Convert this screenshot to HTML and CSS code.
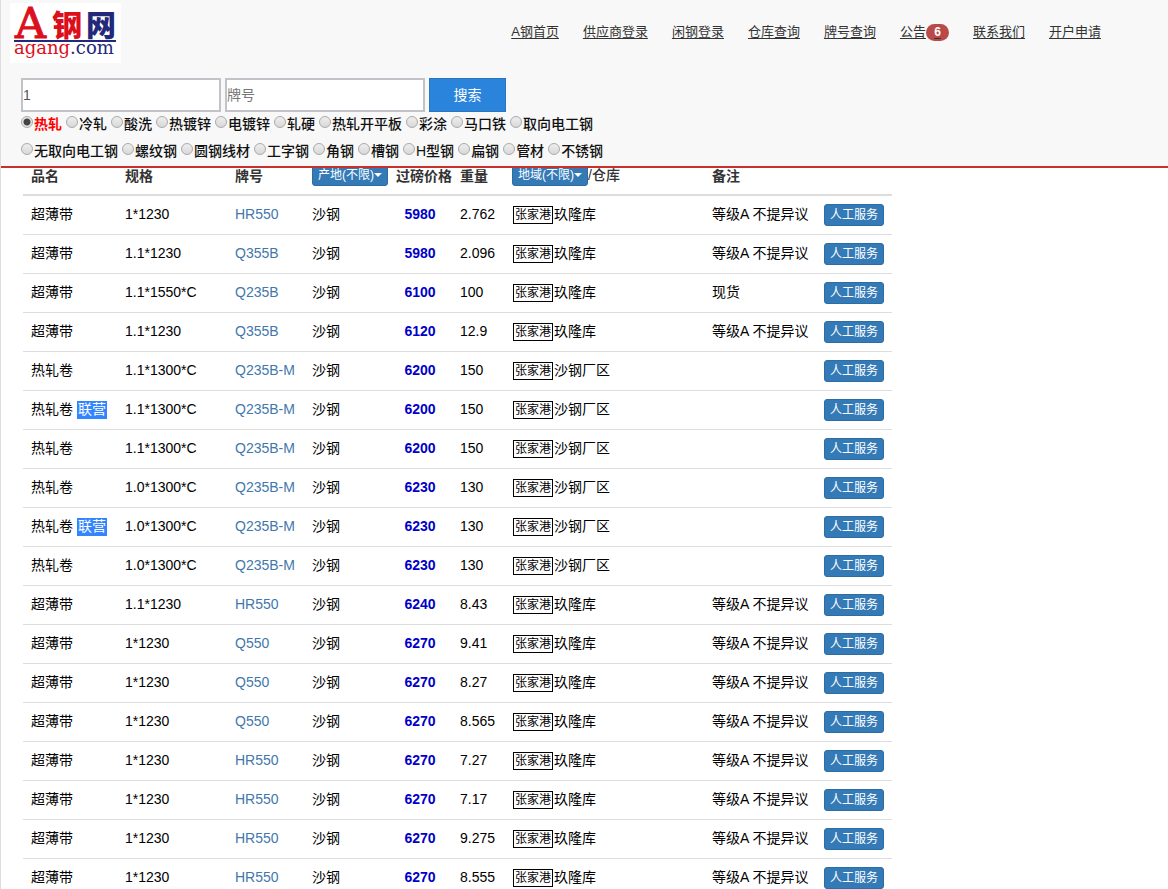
FILE: index.html
```html
<!DOCTYPE html>
<html lang="zh-CN">
<head>
<meta charset="utf-8">
<title>A钢网</title>
<link rel="stylesheet" href="styles.css">
</head>
<body>
<header class="site-header">
  <div class="top-bar">
    <svg class="logo" width="111" height="60" viewBox="0 0 111 60" role="img" aria-label="A钢网 agang.com">
      <rect width="111" height="60" fill="#fff"/>
      <text class="logo-a" x="5" y="35">A</text>
      <text class="logo-cjk logo-red" x="42" y="33">钢</text>
      <text class="logo-cjk logo-blue" x="76" y="33">网</text>
      <rect x="4" y="37" width="102" height="2" fill="#23297a"/>
      <text class="logo-domain" x="4" y="51"><tspan class="logo-red">agang</tspan><tspan class="logo-blue">.com</tspan></text>
    </svg>
    <nav class="nav">
      <a href="#">A钢首页</a>
      <a href="#">供应商登录</a>
      <a href="#">闲钢登录</a>
      <a href="#">仓库查询</a>
      <a href="#">牌号查询</a>
      <a href="#" class="notice">公告<span class="count">6</span></a>
      <a href="#">联系我们</a>
      <a href="#">开户申请</a>
    </nav>
  </div>
  <form class="search">
    <div class="search-row">
      <input class="field" type="text" value="1" aria-label="规格">
      <input class="field" type="text" placeholder="牌号" aria-label="牌号">
      <button class="search-btn" type="button">搜索</button>
    </div>
    <div class="kinds">
      <label class="active"><input type="radio" name="kind" checked>热轧</label>
      <label><input type="radio" name="kind">冷轧</label>
      <label><input type="radio" name="kind">酸洗</label>
      <label><input type="radio" name="kind">热镀锌</label>
      <label><input type="radio" name="kind">电镀锌</label>
      <label><input type="radio" name="kind">轧硬</label>
      <label><input type="radio" name="kind">热轧开平板</label>
      <label><input type="radio" name="kind">彩涂</label>
      <label><input type="radio" name="kind">马口铁</label>
      <label><input type="radio" name="kind">取向电工钢</label>
    </div>
    <div class="kinds">
      <label><input type="radio" name="kind">无取向电工钢</label>
      <label><input type="radio" name="kind">螺纹钢</label>
      <label><input type="radio" name="kind">圆钢线材</label>
      <label><input type="radio" name="kind">工字钢</label>
      <label><input type="radio" name="kind">角钢</label>
      <label><input type="radio" name="kind">槽钢</label>
      <label><input type="radio" name="kind">H型钢</label>
      <label><input type="radio" name="kind">扁钢</label>
      <label><input type="radio" name="kind">管材</label>
      <label><input type="radio" name="kind">不锈钢</label>
    </div>
  </form>
</header>
<main class="content">
  <table class="stock">
    <colgroup>
      <col class="c-name"><col class="c-spec"><col class="c-grade"><col class="c-origin"><col class="c-price"><col class="c-weight"><col class="c-store"><col class="c-note"><col class="c-action">
    </colgroup>
    <thead>
      <tr>
        <th>品名</th><th>规格</th><th>牌号</th>
        <th><button class="btn drop" type="button">产地(不限)<span class="caret"></span></button></th>
        <th>过磅价格</th><th>重量</th>
        <th><div class="store-head"><button class="btn drop" type="button">地域(不限)<span class="caret"></span></button>/仓库</div></th>
        <th>备注</th><th></th>
      </tr>
    </thead>
    <tbody id="rows"></tbody>
  </table>
</main>
<script src="rows.js"></script>
</body>
</html>
```
FILE: rows.js
```js
const thin = '超薄带', coil = '热轧卷', depot = '玖隆库', plant = '沙钢厂区', noDispute = '等级A 不提异议';
const stock = [
  [thin, '1*1230', 'HR550', 5980, '2.762', depot, noDispute],
  [thin, '1.1*1230', 'Q355B', 5980, '2.096', depot, noDispute],
  [thin, '1.1*1550*C', 'Q235B', 6100, '100', depot, '现货'],
  [thin, '1.1*1230', 'Q355B', 6120, '12.9', depot, noDispute],
  [coil, '1.1*1300*C', 'Q235B-M', 6200, '150', plant, ''],
  [coil, '1.1*1300*C', 'Q235B-M', 6200, '150', plant, '', true],
  [coil, '1.1*1300*C', 'Q235B-M', 6200, '150', plant, ''],
  [coil, '1.0*1300*C', 'Q235B-M', 6230, '130', plant, ''],
  [coil, '1.0*1300*C', 'Q235B-M', 6230, '130', plant, '', true],
  [coil, '1.0*1300*C', 'Q235B-M', 6230, '130', plant, ''],
  [thin, '1.1*1230', 'HR550', 6240, '8.43', depot, noDispute],
  [thin, '1*1230', 'Q550', 6270, '9.41', depot, noDispute],
  [thin, '1*1230', 'Q550', 6270, '8.27', depot, noDispute],
  [thin, '1*1230', 'Q550', 6270, '8.565', depot, noDispute],
  [thin, '1*1230', 'HR550', 6270, '7.27', depot, noDispute],
  [thin, '1*1230', 'HR550', 6270, '7.17', depot, noDispute],
  [thin, '1*1230', 'HR550', 6270, '9.275', depot, noDispute],
  [thin, '1*1230', 'HR550', 6270, '8.555', depot, noDispute]
];
document.getElementById('rows').innerHTML = stock.map(([name, spec, grade, price, weight, store, note, joint]) => `
  <tr>
    <td>${name}${joint ? ' <span class="joint">联营</span>' : ''}</td>
    <td>${spec}</td>
    <td><a class="grade" href="#">${grade}</a></td>
    <td>沙钢</td>
    <td class="price">${price}</td>
    <td>${weight}</td>
    <td><div class="store"><span class="city">张家港</span>${store}</div></td>
    <td>${note}</td>
    <td><button class="btn" type="button">人工服务</button></td>
  </tr>`).join('');
```
FILE: styles.css
```css
* { box-sizing: border-box; }

body {
  margin: 0;
  height: 100vh;
  overflow: hidden;
  border-left: 1px solid #ddd;
  background: #fff;
  color: #000;
  font: 14px/20px "Liberation Sans", "Noto Sans CJK SC", sans-serif;
}

button, input { font-family: inherit; }

.site-header {
  position: relative;
  z-index: 1;
  padding-top: 3px;
  background: #f8f8f8;
  border-bottom: 2px solid #c9302c;
}

.top-bar {
  display: flex;
  justify-content: space-between;
  align-items: flex-start;
  padding: 0 67px 0 9px;
}

.logo { display: block; flex: none; }
.logo-a { font: 43px "DejaVu Serif", serif; fill: #dc0f1c; stroke: #dc0f1c; }
.logo-cjk { font: 900 30px "Noto Sans CJK SC", sans-serif; }
.logo-domain { font: 18px "DejaVu Serif", serif; }
.logo-red { fill: #dc0f1c; }
.logo-blue { fill: #23297a; }

.nav {
  display: flex;
  gap: 24px;
  padding-top: 19px;
  font-size: 13px;
  white-space: nowrap;
}
.nav a { color: #333; text-underline-offset: 2px; }
.notice { display: flex; align-items: center; }
.count {
  min-width: 23px;
  height: 17px;
  border-radius: 9px;
  background: #b94a48;
  color: #fff;
  font-size: 12px;
  font-weight: 700;
  line-height: 17px;
  text-align: center;
}

.search { padding: 15px 20px 0; }
.search-row { display: flex; gap: 4px; }
.field {
  width: 200px;
  height: 34px;
  padding: 0;
  border: 2px solid #c2c3c9;
  border-radius: 0;
  background: #fff;
  color: #555;
  font-size: 14px;
}
.field::placeholder { color: #777; opacity: 1; }
.search-btn {
  width: 77px;
  height: 34px;
  padding: 0 0 2px;
  border: 1px solid #2a76bd;
  background: #2a84db;
  color: #fff;
  font-size: 14px;
}

.kinds {
  display: flex;
  gap: 4px;
  height: 27px;
  color: #111;
  font-weight: 500;
  line-height: 25px;
  white-space: nowrap;
}
.kinds label { display: flex; align-items: flex-start; }
.kinds .active { color: #f00; font-weight: 700; }
.kinds input {
  appearance: none;
  flex: none;
  width: 12px;
  height: 12px;
  margin: 4px 1px 0 0;
  border: 1px solid #aaa;
  border-radius: 50%;
  background: linear-gradient(#eee, #d8d8d8);
}
.kinds input:checked { background: radial-gradient(circle, #444 0 3px, #e6e6e6 4px); }

.content { padding: 0 22px; margin-top: -12px; }
.stock {
  width: 869px;
  table-layout: fixed;
  border-collapse: collapse;
  white-space: nowrap;
}
.c-name { width: 94px; }
.c-spec { width: 110px; }
.c-grade { width: 77px; }
.c-origin { width: 84px; }
.c-price { width: 64px; }
.c-weight { width: 52px; }
.c-store { width: 200px; }
.c-note { width: 112px; }
.c-action { width: 76px; }

.stock th {
  padding: 8px;
  border-bottom: 2px solid #ddd;
  color: #333;
  font-weight: 700;
  text-align: left;
  vertical-align: bottom;
}
.stock td {
  height: 39px;
  padding: 8px;
  border-top: 1px solid #ddd;
  vertical-align: top;
}
.stock td.price { color: #0000c8; font-weight: 700; text-align: center; }
.grade { color: #4277ac; text-decoration: none; }

.joint {
  display: inline-block;
  height: 18px;
  margin-top: 2px;
  padding: 0 1px;
  background: #3385ff;
  color: #fff;
  line-height: 16px;
  vertical-align: top;
}
.store, .store-head { display: flex; align-items: center; }
.store-head { font-weight: 500; }
.store { gap: 1px; }
.city {
  height: 18px;
  margin: 2px 0 0 1px;
  padding: 0 1px;
  border: 1px solid #000;
  font-size: 12px;
  line-height: 16px;
}

.btn {
  display: block;
  height: 22px;
  padding: 0 5px;
  border: 1px solid #2e6da4;
  border-radius: 3px;
  background: #337ab7;
  color: #fff;
  font-size: 12px;
  line-height: 18px;
}
.drop { display: flex; align-items: center; }
.caret {
  border-top: 4px solid #fff;
  border-right: 4px solid transparent;
  border-left: 4px solid transparent;
}
```
